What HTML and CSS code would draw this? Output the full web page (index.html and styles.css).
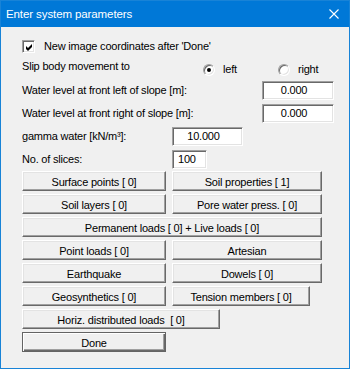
FILE: index.html
```html
<!DOCTYPE html>
<html>
<head>
<meta charset="utf-8">
<link rel="stylesheet" href="styles.css">
</head>
<body>
<div class="window">
  <div class="titlebar">
    <span class="title">Enter system parameters</span>
    <svg class="close" width="10" height="10" viewBox="0 0 10 10"><path d="M0.5 0.5 L9.5 9.5 M9.5 0.5 L0.5 9.5" stroke="#fff" stroke-width="1.1" fill="none"/></svg>
  </div>
  <div class="content">
    <div class="row row-check">
      <span class="checkbox"><svg width="9" height="9" viewBox="0 0 9 9"><polygon points="1,3 3,5 7,1 7,4 3,8 1,6" fill="#000"/></svg></span>
      <span class="label">New image coordinates after 'Done'</span>
    </div>
    <div class="row row-slip">
      <span class="label slip-label">Slip body movement to</span>
      <span class="radio-opt opt-left"><span class="radio checked"></span><span class="label">left</span></span>
      <span class="radio-opt"><span class="radio"></span><span class="label">right</span></span>
    </div>
    <div class="row field-row">
      <span class="label label-wide">Water level at front left of slope [m]:</span>
      <span class="input input-wide">0.000</span>
    </div>
    <div class="row field-row">
      <span class="label label-wide">Water level at front right of slope [m]:</span>
      <span class="input input-wide">0.000</span>
    </div>
    <div class="row field-row">
      <span class="label label-narrow">gamma water [kN/m³]:</span>
      <span class="input input-mid">10.000</span>
    </div>
    <div class="row field-row">
      <span class="label label-narrow">No. of slices:</span>
      <span class="input input-small">100</span>
    </div>
    <div class="buttons">
      <button class="btn">Surface points [ 0]</button>
      <button class="btn">Soil properties [ 1]</button>
      <button class="btn">Soil layers [ 0]</button>
      <button class="btn">Pore water press. [ 0]</button>
      <button class="btn span2">Permanent loads [ 0] + Live loads [ 0]</button>
      <button class="btn">Point loads [ 0]</button>
      <button class="btn">Artesian</button>
      <button class="btn">Earthquake</button>
      <button class="btn">Dowels [ 0]</button>
      <button class="btn">Geosynthetics [ 0]</button>
      <button class="btn btn-tension">Tension members [ 0]</button>
      <button class="btn btn-horiz">Horiz. distributed loads &nbsp;[ 0]</button>
      <button class="btn btn-done">Done</button>
    </div>
  </div>
</div>
</body>
</html>
```

FILE: styles.css
```css
* { box-sizing: border-box; }
html, body { margin: 0; padding: 0; background: #ffffff; }
body {
  width: 350px;
  height: 370px;
  font-family: "Liberation Sans", Arial, sans-serif;
  font-size: 11px;
  letter-spacing: -0.2px;
  color: #000;
}
.window {
  width: 350px;
  height: 369px;
  border: 1px solid #1883d7;
  background: #f0f0f0;
  display: flex;
  flex-direction: column;
}
.titlebar {
  flex: none;
  height: 26px;
  background: #0078d7;
  color: #fff;
  display: flex;
  align-items: center;
  justify-content: space-between;
  padding-left: 5px;
}
.title { font-size: 11.5px; line-height: 14px; letter-spacing: -0.1px; }
.close { margin-right: 10px; display: block; }
.content {
  display: flex;
  flex-direction: column;
  padding: 0 15px 0 21px;
}
.row { display: flex; align-items: center; }
.label { line-height: 13px; white-space: nowrap; }
.row-check { margin-top: 13px; height: 13px; }
.checkbox {
  width: 13px;
  height: 13px;
  background: #fff;
  border-style: solid;
  border-width: 1px;
  border-color: #a0a0a0 #fff #fff #a0a0a0;
  box-shadow: inset 1px 1px 0 #696969, inset -1px -1px 0 #e3e3e3;
  margin-right: 9px;
  display: flex;
  align-items: center;
  justify-content: center;
  padding: 1px 0 0 1px;
}
.checkbox svg { display: block; }
.row-slip { margin-top: 7px; height: 17px; align-items: flex-start; }
.slip-label { width: 181px; }
.radio-opt { display: flex; align-items: center; margin-top: 3px; }
.opt-left { width: 75px; }
.radio {
  width: 12px;
  height: 12px;
  border-radius: 50%;
  background: #fff;
  border-style: solid;
  border-width: 1px;
  border-color: #a0a0a0 #fff #fff #a0a0a0;
  box-shadow: inset 1px 1px 0 #696969, inset -1px -1px 0 #e3e3e3;
  margin-right: 8px;
  display: flex;
  align-items: center;
  justify-content: center;
}
.radio.checked::after {
  content: "";
  width: 4px;
  height: 4px;
  border-radius: 50%;
  background: #000;
}
.field-row { margin-top: 4px; height: 19px; }
.label-wide { width: 240px; }
.label-narrow { width: 150px; }
.input {
  height: 19px;
  background: #fff;
  border-style: solid;
  border-width: 1px;
  border-color: #a0a0a0 #fff #fff #a0a0a0;
  box-shadow: inset 1px 1px 0 #696969, inset -1px -1px 0 #e3e3e3;
  display: flex;
  align-items: center;
  justify-content: center;
  padding-right: 8px;
  line-height: 13px;
  white-space: nowrap;
}
.input-wide { width: 72px; }
.input-mid { width: 71px; }
.input-small { width: 35px; justify-content: flex-start; padding: 0 0 0 5px; }
.buttons {
  margin-top: 2px;
  display: grid;
  grid-template-columns: 144px 150px;
  grid-auto-rows: 20px;
  column-gap: 6px;
  row-gap: 3px;
}
.btn {
  height: 20px;
  margin: 0;
  padding: 2px 0 0 0;
  background: #f0f0f0;
  border-style: solid;
  border-width: 1px;
  border-color: #ffffff #696969 #696969 #ffffff;
  box-shadow: inset -1px -1px 0 #a0a0a0, inset 1px 1px 0 #e3e3e3;
  font-family: inherit;
  font-size: 11px;
  letter-spacing: -0.2px;
  line-height: 13px;
  color: #000;
  text-align: center;
  white-space: nowrap;
}
.span2 { grid-column: 1 / 3; }
.btn-tension { width: 138px; }
.btn-horiz { grid-column: 1 / 3; width: 198px; }
.btn-done {
  grid-column: 1 / 2;
  border-color: #646464;
  box-shadow: inset 1px 1px 0 #ffffff, inset -1px -1px 0 #696969, inset -2px -2px 0 #a0a0a0;
}
```
